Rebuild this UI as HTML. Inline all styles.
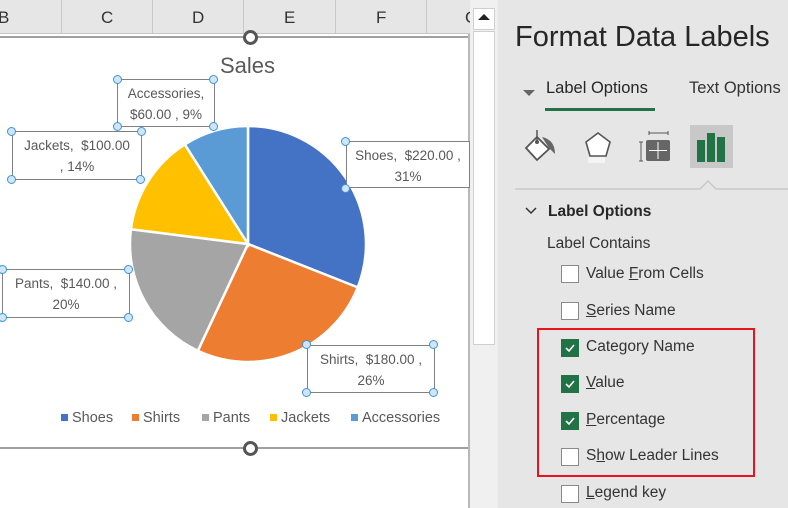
<!DOCTYPE html>
<html><head><style>
*{margin:0;padding:0;box-sizing:border-box}
body{width:788px;height:508px;overflow:hidden;background:#fff;font-family:"Liberation Sans",sans-serif;position:relative}
.a{position:absolute}
.hdr{top:0;left:0;width:470px;height:34px;background:#e6e6e6;border-bottom:1px solid #c6c6c6}
.col{position:absolute;top:8px;font-size:17px;color:#333}
.sep{position:absolute;top:0;width:1px;height:34px;background:#c8c8c8}
.lbl{position:absolute;border:1px solid #808080;background:#fff;font-size:13.5px;color:#595959;text-align:center;line-height:21px}
.h{position:absolute;width:9px;height:9px;border-radius:50%;background:#cfe6fa;border:1.5px solid #3d94de}
.panel{left:498px;top:0;width:290px;height:508px;background:#e6e6e6}
.cb{position:absolute;left:561px;width:18px;height:18px;border:1px solid #8a8a8a;background:#fff}
.cb.on{background:#217346;border-color:#217346}
.ct{position:absolute;left:586px;font-size:15.5px;color:#333}
.lg{position:absolute;top:410px;font-size:14.5px;color:#595959;white-space:nowrap}
.lg i{display:inline-block;width:7px;height:7px;margin-right:4px;vertical-align:1px}
</style></head><body>
<div class="a hdr">
<span class="col" style="left:-2px">B</span>
<div class="sep" style="left:61px"></div>
<span class="col" style="left:101px">C</span>
<div class="sep" style="left:152px"></div>
<span class="col" style="left:192px">D</span>
<div class="sep" style="left:243px"></div>
<span class="col" style="left:284px">E</span>
<div class="sep" style="left:335px"></div>
<span class="col" style="left:376px">F</span>
<div class="sep" style="left:426px"></div>
<span class="col" style="left:465px">G</span>
</div>
<div class="a" style="left:0;top:36px;width:469px;height:2px;background:#a0a0a0"></div>
<div class="a" style="left:0;top:447px;width:469px;height:2px;background:#a0a0a0"></div>
<div class="a" style="left:468px;top:34px;width:2px;height:474px;background:#b8b8b8"></div>
<div class="a" style="left:470px;top:0;width:28px;height:508px;background:#f0f0f0"></div>
<div class="a" style="left:473px;top:8px;width:22px;height:22px;background:#fff;border:1px solid #cfcfcf"></div>
<div class="a" style="left:478px;top:14px;width:0;height:0;border-left:6px solid transparent;border-right:6px solid transparent;border-bottom:6px solid #222"></div>
<div class="a" style="left:473px;top:31px;width:22px;height:314px;background:#fff;border:1px solid #cfcfcf"></div>
<div class="a" style="left:243px;top:30px;width:15px;height:15px;border-radius:50%;border:3px solid #555;background:#fff"></div>
<div class="a" style="left:243px;top:441px;width:15px;height:15px;border-radius:50%;border:3px solid #555;background:#fff"></div>
<div class="a" style="left:220px;top:53px;font-size:22px;color:#595959">Sales</div>
<svg class="a" style="left:0;top:0" width="470" height="450">
<g stroke="#fff" stroke-width="2.5">
<path d="M248,244 L248,126 A118,118 0 0 1 357.7,287.4 Z" fill="#4472c4"/>
<path d="M248,244 L357.7,287.4 A118,118 0 0 1 197.8,350.8 Z" fill="#ed7d31"/>
<path d="M248,244 L197.8,350.8 A118,118 0 0 1 130.9,229.2 Z" fill="#a5a5a5"/>
<path d="M248,244 L130.9,229.2 A118,118 0 0 1 184.8,144.4 Z" fill="#ffc000"/>
<path d="M248,244 L184.8,144.4 A118,118 0 0 1 248,126 Z" fill="#5b9bd5"/>
</g></svg>
<div class="lbl" style="left:117px;top:79px;width:98px;height:48px;padding-top:3px">Accessories,<br>$60.00 , 9%</div>
<div class="lbl" style="left:12px;top:131px;width:130px;height:49px;padding-top:3px">Jackets,&nbsp; $100.00<br>, 14%</div>
<div class="lbl" style="left:346px;top:141px;width:124px;height:47px;padding-top:3px">Shoes,&nbsp; $220.00 ,<br>31%</div>
<div class="lbl" style="left:2px;top:269px;width:128px;height:49px;padding-top:3px">Pants,&nbsp; $140.00 ,<br>20%</div>
<div class="lbl" style="left:307px;top:345px;width:128px;height:48px;padding-top:3px">Shirts,&nbsp; $180.00 ,<br>26%</div>
<div class="h" style="left:113px;top:75px"></div><div class="h" style="left:209px;top:75px"></div><div class="h" style="left:113px;top:122px"></div><div class="h" style="left:209px;top:122px"></div>
<div class="h" style="left:7px;top:127px"></div><div class="h" style="left:137px;top:127px"></div><div class="h" style="left:7px;top:175px"></div><div class="h" style="left:136px;top:175px"></div>
<div class="h" style="left:341px;top:137px"></div><div class="h" style="left:341px;top:184px"></div>
<div class="h" style="left:-2px;top:265px"></div><div class="h" style="left:124px;top:265px"></div><div class="h" style="left:-2px;top:313px"></div><div class="h" style="left:124px;top:313px"></div>
<div class="h" style="left:302px;top:340px"></div><div class="h" style="left:429px;top:340px"></div><div class="h" style="left:302px;top:388px"></div><div class="h" style="left:429px;top:388px"></div>
<div class="lg" style="left:61px"><i style="background:#4472c4"></i>Shoes</div>
<div class="lg" style="left:132px"><i style="background:#ed7d31"></i>Shirts</div>
<div class="lg" style="left:202px"><i style="background:#a5a5a5"></i>Pants</div>
<div class="lg" style="left:270px"><i style="background:#ffc000"></i>Jackets</div>
<div class="lg" style="left:351px"><i style="background:#5b9bd5"></i>Accessories</div>

<div class="a panel"></div>
<div class="a" style="left:515px;top:21px;font-size:29px;color:#262626;white-space:nowrap">Format Data Labels</div>
<div class="a" style="left:523px;top:90px;width:0;height:0;border-left:6px solid transparent;border-right:6px solid transparent;border-top:6px solid #666"></div>
<div class="a" style="left:546px;top:79px;font-size:16.5px;color:#262626">Label Options</div>
<div class="a" style="left:545px;top:108px;width:110px;height:3px;background:#217346"></div>
<div class="a" style="left:689px;top:79px;font-size:16.5px;color:#333">Text Options</div>
<svg class="a" style="left:515px;top:124px" width="273" height="70">
<path d="M11,24 L22,13 L34,25 L22,36 Z" fill="#fff" stroke="#555" stroke-width="1.8"/>
<path d="M22,6 L22,17" stroke="#555" stroke-width="1.5"/><circle cx="22" cy="18" r="2" fill="#555"/>
<path d="M27,13 Q40,16 40,30 L34,24 Z" fill="#666"/>
<path d="M83,9 L95,18 L91,32 L75,32 L71,18 Z" fill="#fff" stroke="#555" stroke-width="1.6"/>
<rect x="73" y="33" width="17" height="6" fill="#f4f4f4"/>
<path d="M134,9 L153,9 M134,7 L134,11 M153,7 L153,11 M126,18 L126,37 M124,18 L128,18 M124,37 L128,37" stroke="#555" stroke-width="1"/>
<rect x="131" y="16" width="24" height="21" rx="2" fill="#666"/>
<path d="M143,18 L143,35 M134,26.5 L152,26.5" stroke="#fff" stroke-width="1"/>
<rect x="175" y="1" width="43" height="43" fill="#c8c8c8"/>
<rect x="182" y="16" width="8" height="22" fill="#217346"/><rect x="192" y="9" width="8" height="29" fill="#217346"/><rect x="202" y="13" width="8" height="25" fill="#217346"/>
<path d="M0,65 L185,65 L193,57 L201,65 L273,65" fill="none" stroke="#c8c8c8" stroke-width="1.5"/>
</svg>
<svg class="a" style="left:525px;top:206px" width="14" height="10"><path d="M1,2 L6,7 L11,2" fill="none" stroke="#333" stroke-width="1.5"/></svg>
<div class="a" style="left:548px;top:203px;font-size:15.5px;font-weight:bold;color:#262626">Label Options</div>
<div class="a" style="left:547px;top:235px;font-size:15.5px;color:#333">Label Contains</div>
<div class="a" style="left:537px;top:328px;width:218px;height:149px;border:2px solid #e8141c"></div>
<div class="cb" style="top:265px"></div><div class="ct" style="top:265px">Value <u>F</u>rom Cells</div>
<div class="cb" style="top:302px"></div><div class="ct" style="top:302px"><u>S</u>eries Name</div>
<div class="cb on" style="top:339px"></div><div class="ct" style="top:338px">Cate<u>g</u>ory Name</div>
<div class="cb on" style="top:375px"></div><div class="ct" style="top:374px"><u>V</u>alue</div>
<div class="cb on" style="top:412px"></div><div class="ct" style="top:411px"><u>P</u>ercentage</div>
<div class="cb" style="top:448px"></div><div class="ct" style="top:447px">S<u>h</u>ow Leader Lines</div>
<div class="cb" style="top:485px"></div><div class="ct" style="top:484px"><u>L</u>egend key</div>
<svg class="a" style="left:561px;top:339px" width="18" height="100">
<g fill="none" stroke="#fff" stroke-width="1.6"><path d="M5,9 L8,12 L13,6"/><path d="M5,45 L8,48 L13,42"/><path d="M5,82 L8,85 L13,79"/></g></svg>
</body></html>
